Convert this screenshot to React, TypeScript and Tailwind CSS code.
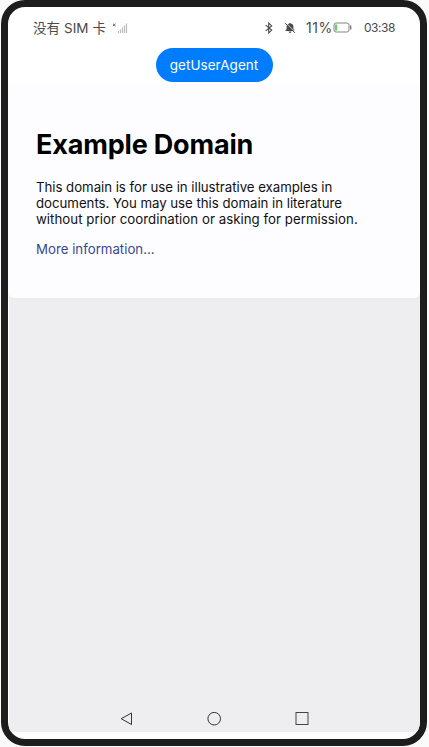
import React from "react";

function StatusBar() {
  return (
    <div className="flex h-[41px] shrink-0 items-center pl-[25px] pr-[24px] text-[#4a4a4a]">
      <span className="w-[74px] whitespace-nowrap font-['Inter','Noto_Sans_CJK_SC',sans-serif] text-[13.5px] leading-5 tracking-[0.05px]">没有 SIM 卡</span>
      <svg className="ml-[4px]" width="18" height="12" viewBox="0 0 18 12" fill="none">
        <path d="M2 1.8l2.5 2.2m0-2.2L2 4" stroke="#666" />
        <path d="M7.5 11v-2M9.5 11V7.5M11.5 11V5.5M13.5 11V3.5M15.5 11V1.5" stroke="#bdbdbd" strokeWidth="1.2" />
      </svg>
      <div className="grow" />
      <svg width="10" height="12" viewBox="0 0 10 12" fill="none" stroke="#4a4a4a" strokeWidth="1.1">
        <path d="M1.7 3.1l6 5-3 2.8V1.1l3 2.8-6 5" />
      </svg>
      <svg className="ml-[10px]" width="12" height="12" viewBox="0 0 12 12">
        <path d="M1.6 9v-.9l1-1V4.8C2.6 3 3.7 2 5.2 1.6a.9.9 0 0 1 1.7 0C8.5 2 9.4 3.1 9.4 4.8v2.3l1 1V9zM4.6 9.6h2.9a1.4 1.4 0 0 1-2.9 0z" fill="#4a4a4a" />
        <path d="M2.1.9l9.3 9.3" stroke="#fff" strokeWidth=".7" />
        <path d="M1.2 1.2l9.6 9.6" stroke="#4a4a4a" />
      </svg>
      <span className="ml-[10px] w-[27px] whitespace-nowrap font-['Inter',sans-serif] text-[14px] leading-5 tracking-[0.5px]">11%</span>
      <svg width="19" height="11" viewBox="0 0 19 11" fill="none">
        <rect x="1" y="1" width="15" height="9" rx="2" stroke="#858585" />
        <path d="M2 2.5h2v6H2z" fill="#52e052" />
        <path d="M17.7 3.5v4" stroke="#777" strokeWidth="1.3" />
      </svg>
      <span className="ml-[12px] w-[32px] whitespace-nowrap font-['Inter',sans-serif] text-[12px] leading-5 tracking-[-0.45px]">03:38</span>
    </div>
  );
}

function NavigationBar() {
  return (
    <div className="flex h-[26px] items-center justify-center gap-[74px] pr-[2px]">
      <svg width="14" height="14" viewBox="0 0 14 14" fill="none" stroke="#333">
        <path d="M12.5 1v11.5L2.2 6.7z" />
      </svg>
      <svg width="14" height="14" viewBox="0 0 14 14" fill="none" stroke="#333">
        <circle cx="7.2" cy="6.7" r="6.3" />
      </svg>
      <svg width="14" height="14" viewBox="0 0 14 14" fill="none" stroke="#444">
        <rect x="1" y=".5" width="12" height="12" />
      </svg>
    </div>
  );
}

export default function App() {
  return (
    <div className="h-[747px] w-[429px] overflow-hidden bg-[#fafafa] pl-px font-['Inter',sans-serif]">
      <div className="flex h-[746px] w-[426px] flex-col overflow-hidden rounded-[24px] border-[7px] border-[#1d1d1d] bg-white">
        <StatusBar />
        <button className="h-[34px] w-[117px] shrink-0 self-center whitespace-nowrap rounded-full bg-[#007dff] text-[13.5px] leading-5 tracking-[0.05px] text-white">getUserAgent</button>
        <div className="ml-px mt-[2px] flex h-[648px] flex-col bg-[#eeeef0]">
          <main className="h-[214px] rounded-b-[5px] bg-[#fdfdff] px-[27px] pt-[43px] shadow-[1px_2px_4px_rgba(0,0,0,0.02)]">
            <h1 className="whitespace-nowrap text-[27px] font-bold leading-9 tracking-[-0.17px] text-black">Example Domain</h1>
            <p className="mt-[16px] whitespace-nowrap text-[13.25px] leading-4 text-[#111]">
              <span className="block tracking-[-0.04px]">This domain is for use in illustrative examples in</span>
              <span className="block tracking-[-0.03px]">documents. You may use this domain in literature</span>
              <span className="block tracking-[0.03px]">without prior coordination or asking for permission.</span>
            </p>
            <a className="mt-[14px] block text-[13.25px] leading-4 text-[#38488f]">More information...</a>
          </main>
          <div className="grow" />
          <NavigationBar />
        </div>
      </div>
    </div>
  );
}
